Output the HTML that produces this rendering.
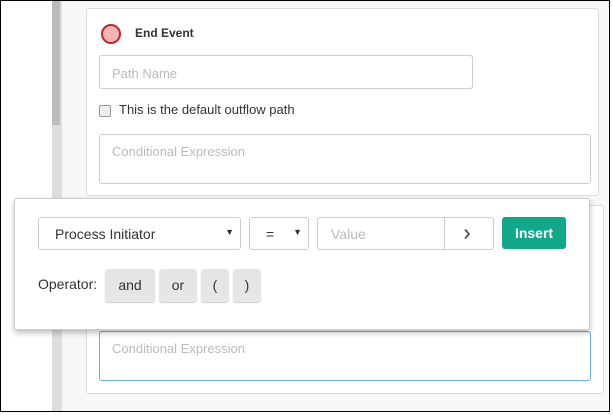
<!DOCTYPE html><html><head><style>
body{margin:0;width:613px;height:415px;position:relative;background:#fff;font-family:"Liberation Sans",sans-serif;overflow:hidden}
.a{position:absolute;box-sizing:border-box}
.ph{color:#bbb;font-size:13px}
.b{background:#e6e6e6;border-radius:3px;font-size:14px;text-align:center;line-height:32px;color:#333;box-shadow:0 1px 1px #ccc}
</style></head><body>
<div class="a" style="left:0;top:0;width:610px;height:412px;border:1px solid #000"></div>
<div class="a" style="left:52px;top:1px;width:10px;height:410px;background:#ddd"></div>
<div class="a" style="left:52px;top:1px;width:8px;height:124px;background:#bbb"></div>
<div class="a" style="left:62px;top:1px;width:547px;height:410px;background:#f7f7f7"></div>
<div class="a" style="left:86px;top:8px;width:513px;height:188px;background:#fff;border:1px solid #ddd;border-radius:3px"></div>
<div class="a" style="left:101px;top:24px;width:20px;height:20px;border-radius:50%;background:#f5b5b5;border:2px solid #c0272d"></div>
<div class="a" style="left:135px;top:26px;font-size:12px;font-weight:bold;color:#333">End Event</div>
<div class="a" style="left:99px;top:55px;width:374px;height:34px;border:1px solid #ccc;border-radius:3px;padding:9px 12px" ><span class="ph">Path Name</span></div>
<div class="a" style="left:99px;top:105px;width:12px;height:12px;border:1px solid #999;border-radius:2px;background:#eee"></div>
<div class="a" style="left:119px;top:102px;font-size:13px;color:#333">This is the default outflow path</div>
<div class="a" style="left:99px;top:134px;width:492px;height:50px;border:1px solid #ccc;border-radius:3px;padding:8px 12px"><span class="ph">Conditional Expression</span></div>
<div class="a" style="left:86px;top:205px;width:518px;height:189px;background:#fff;border:1px solid #ddd;border-radius:3px"></div>
<div class="a" style="left:99px;top:331px;width:492px;height:50px;border:1px solid #66afe9;border-radius:3px;padding:8px 12px"><span class="ph">Conditional Expression</span></div>
<div class="a" style="left:14px;top:198px;width:576px;height:132px;background:#fff;border:1px solid #ccc;border-radius:3px;box-shadow:0 3px 6px rgba(0,0,0,.25)"></div>
<div class="a" style="left:38px;top:217px;width:203px;height:33px;border:1px solid #ccc;border-radius:3px;padding:8px 16px;font-size:14px;color:#333">Process Initiator<span style="position:absolute;right:6px;top:9px;font-size:9px">▼</span></div>
<div class="a" style="left:249px;top:217px;width:60px;height:33px;border:1px solid #ccc;border-radius:3px;padding:8px 16px;font-size:14px;color:#333">=<span style="position:absolute;right:6px;top:9px;font-size:9px">▼</span></div>
<div class="a" style="left:317px;top:217px;width:177px;height:33px;border:1px solid #ccc;border-radius:3px;padding:8px 13px;font-size:14px;color:#bbb">Value</div>
<div class="a" style="left:444px;top:217px;width:1px;height:33px;background:#ccc"></div>
<svg class="a" style="left:463px;top:228px" width="8" height="12"><path d="M2 1.5 L6 6 L2 10.5" fill="none" stroke="#555" stroke-width="1.8"/></svg>
<div class="a" style="left:502px;top:217px;width:64px;height:32px;background:#11a88a;border-radius:3px;color:#fff;font-weight:bold;font-size:14px;text-align:center;line-height:32px">Insert</div>
<div class="a" style="left:38px;top:276px;font-size:14px;color:#333">Operator:</div>
<div class="a b" style="left:105px;top:269px;width:50px;height:33px">and</div>
<div class="a b" style="left:159px;top:269px;width:38px;height:33px">or</div>
<div class="a b" style="left:201px;top:269px;width:28px;height:33px">(</div>
<div class="a b" style="left:233px;top:269px;width:28px;height:33px">)</div>
</body></html>
